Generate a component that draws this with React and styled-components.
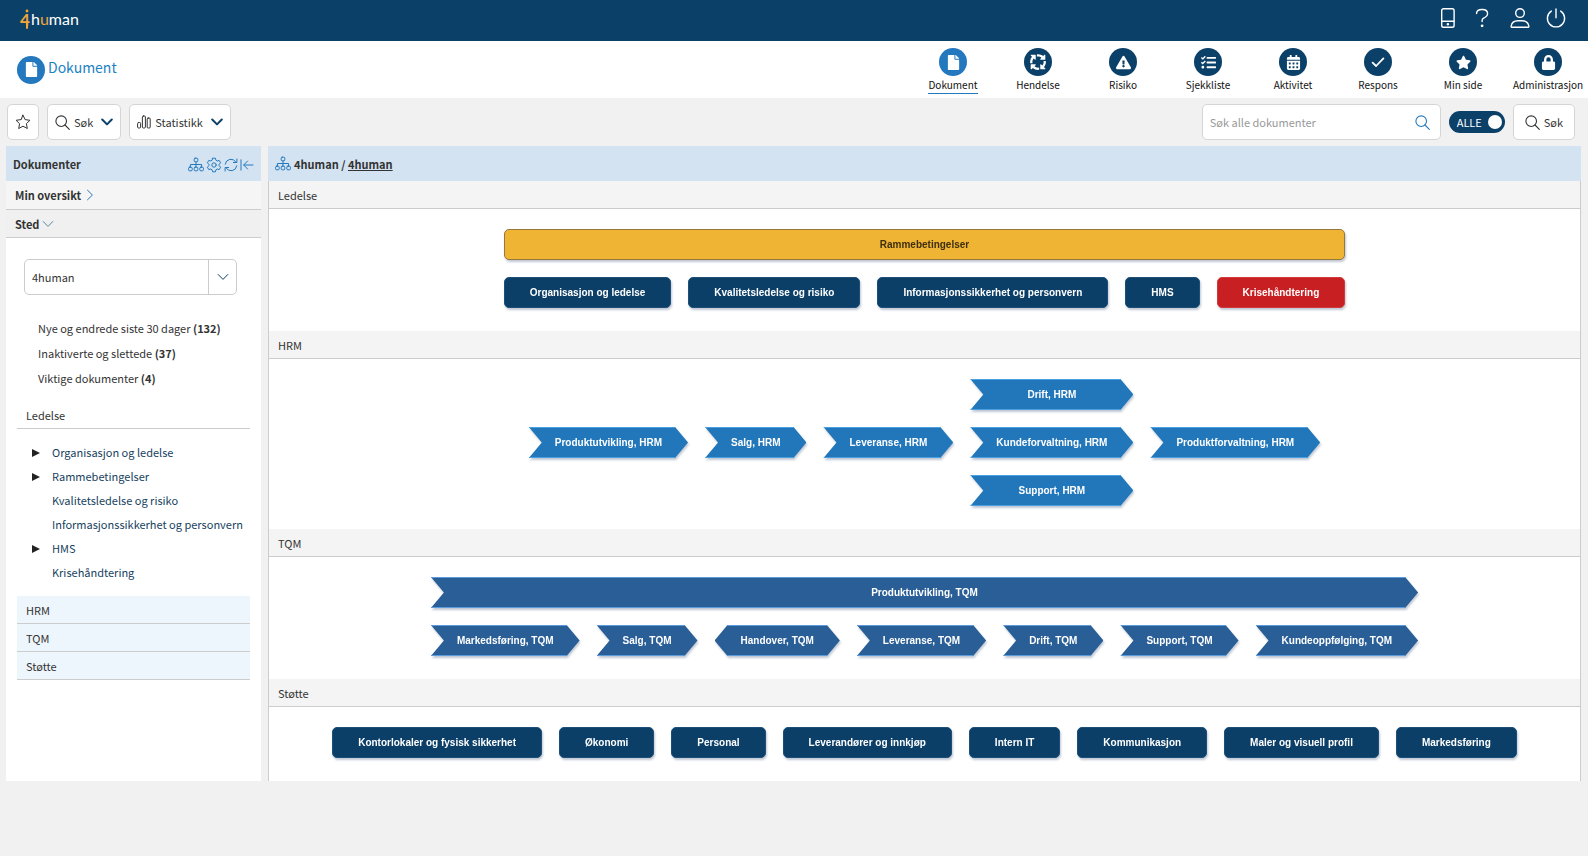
import React from "react";
import styled, { createGlobalStyle } from "styled-components";
import {
  FaFile,
  FaExclamationTriangle,
  FaTasks,
  FaCalendarAlt,
  FaStar,
  FaLock,
} from "react-icons/fa";
import { FaArrowsSpin } from "react-icons/fa6";

//icons
const Icon = ({ size = 16, box = 16, stroke = 1, children }) => (
  <svg
    width={size}
    height={size}
    viewBox={`0 0 ${box} ${box}`}
    fill="none"
    stroke="currentColor"
    strokeWidth={stroke}
    strokeLinecap="round"
    strokeLinejoin="round"
    aria-hidden="true"
  >
    {children}
  </svg>
);

const LogoMark = () => (
  <svg width="60" height="24" viewBox="0 0 60 24">
    <text x="0" y="18" fontSize="17" fontWeight="bold" fill="#f3a536">
      4
    </text>
    <path d="M7 15v5" stroke="#f3a536" strokeWidth="2" strokeLinecap="round" />
    <circle cx="7" cy="3" r="1.4" fill="#f3a536" />
    <text x="11" y="17" fontSize="16" fill="#fff">
      h<tspan fill="#f3a536">u</tspan>man
    </text>
  </svg>
);
const PhoneIcon = () => (
  <Icon size={20} box={20} stroke={1.4}>
    <rect x="3.7" y="0.8" width="12.4" height="18.4" rx="1.8" />
    <path d="M3.7 13.2h12.4" />
    <circle cx="9.9" cy="16.3" r="0.6" fill="currentColor" />
  </Icon>
);
const QuestionIcon = () => (
  <Icon size={20} box={20} stroke={1.4}>
    <path d="M2.6 5.600V4.900C3 2.600 5 1.500 7.600 1.500h0.800c3.200 0 5.200 1.700 5.200 4.200 0 1.800-1 2.900-2.700 3.800l-1.300 0.700c-1 0.600-1.500 1.300-1.500 2.400v1" />
    <circle cx="8.1" cy="17.8" r="0.7" fill="currentColor" />
  </Icon>
);
const UserIcon = () => (
  <Icon size={20} box={20} stroke={1.4}>
    <circle cx="10" cy="5.1" r="4.3" />
    <path d="M1.700 19.200c-0.400 0-0.600-0.300-0.600-0.700 0.500-3.700 3.400-5.700 6.900-5.700h4c3.500 0 6.400 2 6.900 5.700 0 0.400-0.200 0.700-0.600 0.700z" />
  </Icon>
);
const PowerIcon = () => (
  <Icon size={20} box={20} stroke={1.4}>
    <path d="M10 0.900v8.800M5.300 3.100a8.600 8.600 0 1 0 9.400 0" />
  </Icon>
);
const StarIcon = () => (
  <Icon>
    <path d="M8 1.200l2.100 4.400 4.800 0.700-3.500 3.400 0.900 4.800L8 12.200l-4.300 2.300 0.900-4.800L1.100 6.300l4.800-0.700z" />
  </Icon>
);
const SearchIcon = () => (
  <Icon size={15} box={15} stroke={1.1}>
    <circle cx="6.2" cy="6.2" r="5.3" />
    <path d="M10 10l4.300 4.300" />
  </Icon>
);
const BarsIcon = () => (
  <Icon size={14} box={14}>
    <rect x="0.6" y="7.5" width="3" height="5.5" rx="1" />
    <rect x="5.4" y="1" width="3" height="12" rx="1" />
    <rect x="10.2" y="3" width="3" height="10" rx="1" />
  </Icon>
);
const ChevronDown = ({ size = 12, stroke = 1 }) => (
  <Icon size={size} box={12} stroke={stroke}>
    <path d="M1.200 3.500L6 8.400l4.800-4.900" />
  </Icon>
);
const ChevronRight = () => (
  <Icon size={12} box={12}>
    <path d="M3.500 1.200L8.400 6l-4.900 4.800" />
  </Icon>
);
const SitemapIcon = () => (
  <Icon size={16} box={16}>
    <rect x="6.2" y="1.2" width="3.6" height="3.6" rx="1" />
    <rect x="0.6" y="10.2" width="3.6" height="3.6" rx="1" />
    <rect x="6.2" y="10.2" width="3.6" height="3.6" rx="1" />
    <rect x="11.8" y="10.2" width="3.6" height="3.6" rx="1" />
    <path d="M8 4.800v5.400M2.400 10.200V7.500h11.200v2.700" />
  </Icon>
);
const GearIcon = () => (
  <Icon size={16} box={16}>
    <path d="M6.600 1.200h2.800l0.500 2 1.300 0.800 2-0.600 1.400 2.400-1.500 1.500v1.400l1.500 1.500-1.400 2.400-2-0.600-1.300 0.800-0.500 2H6.600l-0.500-2-1.300-0.800-2 0.600-1.400-2.400 1.500-1.500V7.300L1.400 5.800l1.400-2.400 2 0.600 1.300-0.800z" />
    <circle cx="8" cy="8" r="2.2" />
  </Icon>
);
const RefreshIcon = () => (
  <Icon size={14} box={14}>
    <path d="M1.200 6.200A5.800 5.800 0 0 1 12 4.200M12.900 1v3.500H9.400M12.800 7.800A5.800 5.800 0 0 1 2 9.800M1.100 13V9.500h3.500" />
  </Icon>
);
const CollapseIcon = () => (
  <Icon size={14} box={14}>
    <path d="M1 1.800v10.400M13 7H3.800M7.600 3L3.700 7l3.900 4" />
  </Icon>
);
const CheckIcon = () => (
  <Icon size={16} box={16} stroke={1.8}>
    <path d="M2.600 8.600l3.500 3.400 7.300-7.600" />
  </Icon>
);

const modules = [
  { name: "Dokument", icon: <FaFile />, active: true },
  { name: "Hendelse", icon: <FaArrowsSpin size={18} /> },
  { name: "Risiko", icon: <FaExclamationTriangle /> },
  { name: "Sjekkliste", icon: <FaTasks /> },
  { name: "Aktivitet", icon: <FaCalendarAlt /> },
  { name: "Respons", icon: <CheckIcon /> },
  { name: "Min side", icon: <FaStar /> },
  { name: "Administrasjon", icon: <FaLock /> },
];

const shortcuts = [
  { name: "Nye og endrede siste 30 dager", count: 132 },
  { name: "Inaktiverte og slettede", count: 37 },
  { name: "Viktige dokumenter", count: 4 },
];

const tree = [
  { name: "Organisasjon og ledelse", open: true },
  { name: "Rammebetingelser", open: true },
  { name: "Kvalitetsledelse og risiko" },
  { name: "Informasjonssikkerhet og personvern" },
  { name: "HMS", open: true },
  { name: "Krisehåndtering" },
];

// a row holds items, an item that is a list is drawn as a column
const sections = [
  {
    name: "Ledelse",
    shape: "box",
    tone: "navy",
    top: { name: "Rammebetingelser", tone: "yellow" },
    row: [
      "Organisasjon og ledelse",
      "Kvalitetsledelse og risiko",
      "Informasjonssikkerhet og personvern",
      "HMS",
      { name: "Krisehåndtering", tone: "red" },
    ],
  },
  {
    name: "HRM",
    shape: "arrow",
    tone: "blue",
    row: [
      "Produktutvikling, HRM",
      "Salg, HRM",
      "Leveranse, HRM",
      ["Drift, HRM", "Kundeforvaltning, HRM", "Support, HRM"],
      "Produktforvaltning, HRM",
    ],
  },
  {
    name: "TQM",
    shape: "arrow",
    tone: "steel",
    top: { name: "Produktutvikling, TQM" },
    row: [
      "Markedsføring, TQM",
      "Salg, TQM",
      { name: "Handover, TQM", shape: "hex" },
      "Leveranse, TQM",
      "Drift, TQM",
      "Support, TQM",
      "Kundeoppfølging, TQM",
    ],
  },
  {
    name: "Støtte",
    shape: "box",
    tone: "navy",
    row: [
      "Kontorlokaler og fysisk sikkerhet",
      "Økonomi",
      "Personal",
      "Leverandører og innkjøp",
      "Intern IT",
      "Kommunikasjon",
      "Maler og visuell profil",
      "Markedsføring",
    ],
  },
];

const Process = ({ item, section }) => {
  const data = typeof item === "string" ? { name: item } : item;
  return (
    <Shadow>
      <Shape
        type="button"
        $shape={data.shape || section.shape}
        $tone={data.tone || section.tone}
      >
        {data.name}
      </Shape>
    </Shadow>
  );
};

const App = () => {
  return (
    <>
      <GlobalStyle />
      <TopBar>
        <Logo href="#" aria-label="4human">
          <LogoMark />
        </Logo>
        <TopActions>
          <TopButton type="button" aria-label="Mobil">
            <PhoneIcon />
          </TopButton>
          <TopButton type="button" aria-label="Hjelp">
            <QuestionIcon />
          </TopButton>
          <TopButton type="button" aria-label="Profil">
            <UserIcon />
          </TopButton>
          <TopButton type="button" aria-label="Logg ut">
            <PowerIcon />
          </TopButton>
        </TopActions>
      </TopBar>

      <ModuleBar>
        <PageTitle>
          <Circle $active>
            <FaFile />
          </Circle>
          <PageName>Dokument</PageName>
        </PageTitle>
        <Modules>
          {modules.map((item) => (
            <Module href="#" key={item.name}>
              <Circle $active={item.active}>{item.icon}</Circle>
              <ModuleName $active={item.active}>{item.name}</ModuleName>
            </Module>
          ))}
        </Modules>
      </ModuleBar>

      <Toolbar>
        <ToolButton type="button" aria-label="Favoritter">
          <StarIcon />
        </ToolButton>
        <ToolButton type="button">
          <SearchIcon />
          Søk
          <Caret>
            <ChevronDown stroke={2} />
          </Caret>
        </ToolButton>
        <ToolButton type="button">
          <BarsIcon />
          Statistikk
          <Caret>
            <ChevronDown stroke={2} />
          </Caret>
        </ToolButton>
        <Spacer />
        <SearchBox>
          <SearchInput
            type="text"
            placeholder="Søk alle dokumenter"
            aria-label="Søk alle dokumenter"
          />
          <SearchIcon />
        </SearchBox>
        <Toggle>
          ALLE
          <ToggleInput type="checkbox" defaultChecked />
        </Toggle>
        <ToolButton type="button" $wide>
          <SearchIcon />
          Søk
        </ToolButton>
      </Toolbar>

      <Content>
        <Sidebar>
          <PanelHead>
            <PanelTitle>Dokumenter</PanelTitle>
            <PanelActions>
              <IconButton type="button" aria-label="Struktur">
                <SitemapIcon />
              </IconButton>
              <IconButton type="button" aria-label="Innstillinger">
                <GearIcon />
              </IconButton>
              <IconButton type="button" aria-label="Oppdater">
                <RefreshIcon />
              </IconButton>
              <IconButton type="button" aria-label="Skjul">
                <CollapseIcon />
              </IconButton>
            </PanelActions>
          </PanelHead>
          <Fold type="button" $color="#2679bd">
            Min oversikt
            <ChevronRight />
          </Fold>
          <Fold type="button" $open $color="#5f8798">
            Sted
            <ChevronDown />
          </Fold>
          <SidebarBody>
            <SelectBox>
              <Select aria-label="Sted" defaultValue="4human">
                <option>4human</option>
              </Select>
              <SelectArrow>
                <ChevronDown />
              </SelectArrow>
            </SelectBox>
            <Shortcuts>
              {shortcuts.map((item) => (
                <li key={item.name}>
                  <ShortcutLink href="#">
                    {item.name} <b>({item.count})</b>
                  </ShortcutLink>
                </li>
              ))}
            </Shortcuts>
            <Group type="button" $open>
              Ledelse
            </Group>
            <Tree>
              {tree.map((item) => (
                <TreeItem key={item.name}>
                  <TreeMark>{item.open && <Triangle />}</TreeMark>
                  <TreeLink href="#">{item.name}</TreeLink>
                </TreeItem>
              ))}
            </Tree>
            <Group type="button">HRM</Group>
            <Group type="button">TQM</Group>
            <Group type="button">Støtte</Group>
          </SidebarBody>
        </Sidebar>

        <Main>
          <PanelHead>
            <Breadcrumb>
              <SitemapIcon />
              <span>
                4human / <CrumbLink href="#">4human</CrumbLink>
              </span>
            </Breadcrumb>
          </PanelHead>
          <Sections>
            {sections.map((section) => (
              <section key={section.name}>
                <SectionTitle>{section.name}</SectionTitle>
                <Map>
                  <MapInner>
                    {section.top && (
                      <Process item={section.top} section={section} />
                    )}
                    <MapRow>
                      {section.row.map((item, i) =>
                        Array.isArray(item) ? (
                          <MapColumn key={i}>
                            {item.map((sub) => (
                              <Process key={sub} item={sub} section={section} />
                            ))}
                          </MapColumn>
                        ) : (
                          <Process key={i} item={item} section={section} />
                        )
                      )}
                    </MapRow>
                  </MapInner>
                </Map>
              </section>
            ))}
          </Sections>
        </Main>
      </Content>
    </>
  );
};

export default App;

const tones = {
  navy: { bg: "#0b3f68", edge: "#1d4f78", text: "#fff" },
  yellow: { bg: "#f0b435", edge: "#95783a", text: "#3d2f10" },
  red: { bg: "#c82022", edge: "#d03a3c", text: "#fff" },
  blue: { bg: "#2277bb", edge: "#4aa0e0", text: "#fff" },
  steel: { bg: "#295e97", edge: "#5b9bdc", text: "#fff" },
};

const outlines = {
  box: "none",
  arrow:
    "polygon(0 0, calc(100% - 13px) 0, 100% 50%, calc(100% - 13px) 100%, 0 100%, 13px 50%)",
  hex: "polygon(13px 0, calc(100% - 13px) 0, 100% 50%, calc(100% - 13px) 100%, 13px 100%, 0 50%)",
};

const GlobalStyle = createGlobalStyle`
  * {
    box-sizing: border-box;
  }
  body {
    margin: 0;
    background: #f1f1f1;
    color: #333;
    font-family: "Noto Sans CJK SC", "Open Sans", sans-serif;
    font-size: 11px;
    line-height: 20px;
  }
  button, input, select {
    font: inherit;
    color: inherit;
  }
  button {
    cursor: pointer;
  }
  a {
    color: inherit;
    text-decoration: none;
  }
  ul {
    list-style: none;
    margin: 0;
    padding: 0;
  }
  svg {
    display: block;
    flex: none;
  }
`;
const TopBar = styled.header`
  display: flex;
  align-items: flex-start;
  justify-content: space-between;
  height: 41px;
  padding: 8px 22px 0 20px;
  background: #0b4069;
  color: #fff;
`;
const Logo = styled.a`
  font-family: Lato, sans-serif;
`;
const TopActions = styled.div`
  display: flex;
  gap: 16px;
`;
const TopButton = styled.button`
  border: 0;
  padding: 0;
  background: none;
`;
const ModuleBar = styled.div`
  display: flex;
  justify-content: space-between;
  height: 57px;
  background: #fff;
`;
const PageTitle = styled.h1`
  display: flex;
  align-items: center;
  gap: 3px;
  margin: 0;
  padding-left: 17px;
  color: #1b83c4;
  font-size: 14px;
  font-weight: normal;
`;
const PageName = styled.span`
  padding-bottom: 5px;
`;
const Circle = styled.span`
  display: flex;
  align-items: center;
  justify-content: center;
  width: 28px;
  height: 28px;
  border-radius: 50%;
  background: ${(props) => (props.$active ? "#2378be" : "#0b4069")};
  color: #fff;
  font-size: 15px;
`;
const Modules = styled.nav`
  display: flex;
  gap: 5px;
  padding-top: 7px;
`;
const Module = styled.a`
  display: flex;
  flex-direction: column;
  align-items: center;
  width: 80px;
  color: #111;
`;
const ModuleName = styled.span`
  font-size: 10px;
  line-height: 17px;
  border-bottom: 1px solid
    ${(props) => (props.$active ? "#2378be" : "transparent")};
`;
const Toolbar = styled.div`
  display: flex;
  align-items: center;
  gap: 8px;
  height: 48px;
  padding: 0 13px 0 7px;
`;
const ToolButton = styled.button`
  display: flex;
  align-items: center;
  gap: 4px;
  height: 36px;
  padding: ${(props) => (props.$wide ? "0 11px" : "0 7px")};
  border: 1px solid #d5d5d5;
  border-radius: 5px;
  background: #fff;
`;
const Caret = styled.span`
  margin-left: 4px;
  color: #0b4069;
`;
const Spacer = styled.div`
  flex: 1;
`;
const SearchBox = styled.div`
  display: flex;
  align-items: center;
  width: 239px;
  height: 36px;
  padding: 0 10px 0 7px;
  border: 1px solid #d5d5d5;
  border-radius: 5px;
  background: #fff;
  color: #2679bd;
`;
const SearchInput = styled.input`
  flex: 1;
  min-width: 0;
  border: 0;
  padding: 0;
  outline: 0;
  background: none;
  color: #333;
  &::placeholder {
    color: #999;
  }
`;
const Toggle = styled.label`
  display: flex;
  align-items: center;
  justify-content: space-between;
  width: 56px;
  height: 22px;
  padding: 0 3px 0 8px;
  border-radius: 11px;
  background: #0b4069;
  color: #fff;
`;
const ToggleInput = styled.input`
  appearance: none;
  width: 14px;
  height: 14px;
  margin: 0;
  border-radius: 50%;
  background: #fff;
`;
const Content = styled.div`
  display: flex;
  gap: 7px;
  padding: 0 7px 0 6px;
`;
const Sidebar = styled.aside`
  display: flex;
  flex-direction: column;
  flex: none;
  width: 255px;
`;
const PanelHead = styled.div`
  display: flex;
  align-items: center;
  justify-content: space-between;
  height: 35px;
  padding: 0 7px;
  background: #d3e3f2;
`;
const PanelTitle = styled.h2`
  margin: 0;
  font-size: 11px;
`;
const PanelActions = styled.div`
  display: flex;
  align-items: center;
  gap: 2px;
  padding-top: 3px;
  color: #2679bd;
`;
const IconButton = styled.button`
  border: 0;
  padding: 0;
  background: none;
  color: inherit;
`;
const Fold = styled.button`
  display: flex;
  align-items: center;
  gap: 3px;
  height: ${(props) => (props.$open ? "28px" : "29px")};
  padding: 0 9px;
  border: 0;
  border-bottom: 1px solid #ccc;
  background: ${(props) => (props.$open ? "#f0f0f0" : "#f5f5f5")};
  font-weight: bold;
  svg {
    color: ${(props) => props.$color};
  }
`;
const SidebarBody = styled.div`
  flex: 1;
  padding: 21px 11px 0;
  background: #fff;
`;
const SelectBox = styled.div`
  position: relative;
  margin: 0 13px 0 7px;
`;
const Select = styled.select`
  display: block;
  width: 100%;
  height: 36px;
  padding: 0 36px 0 7px;
  appearance: none;
  border: 1px solid #ccc;
  border-radius: 5px;
  background: #fff;
`;
const SelectArrow = styled.span`
  position: absolute;
  top: 1px;
  right: 1px;
  bottom: 1px;
  display: flex;
  align-items: center;
  justify-content: center;
  width: 28px;
  border-left: 1px solid #ccc;
  color: #0b4069;
  pointer-events: none;
`;
const Shortcuts = styled.ul`
  padding: 21px 0 10px 21px;
  line-height: 25px;
`;
const ShortcutLink = styled.a`
  white-space: nowrap;
`;
const Group = styled.button`
  display: block;
  width: 100%;
  height: 28px;
  padding: 0 9px;
  border: 0;
  border-bottom: 1px solid #ccc;
  background: ${(props) => (props.$open ? "none" : "#eef6fd")};
  text-align: left;
`;
const Tree = styled.ul`
  padding: 11px 0 12px;
  line-height: 24px;
`;
const TreeItem = styled.li`
  display: flex;
  align-items: center;
  white-space: nowrap;
`;
const TreeMark = styled.span`
  flex: none;
  width: 35px;
  padding: 2px 0 0 15px;
`;
const Triangle = styled.span`
  display: block;
  width: 8px;
  border-left: 8px solid #222;
  border-top: 4px solid transparent;
  border-bottom: 4px solid transparent;
`;
const TreeLink = styled.a`
  color: #163f60;
`;
const Main = styled.main`
  flex: 1;
  min-width: 0;
`;
const Breadcrumb = styled.div`
  display: flex;
  align-items: center;
  gap: 3px;
  font-weight: bold;
  svg {
    color: #2679bd;
  }
`;
const CrumbLink = styled.a`
  text-decoration: underline;
`;
const Sections = styled.div`
  border: 1px solid #ccc;
  border-width: 0 1px;
  background: #fff;
`;
const SectionTitle = styled.h3`
  height: 28px;
  margin: 0;
  padding: 0 9px;
  border-bottom: 1px solid #ccc;
  background: #f4f4f4;
  font-size: 11px;
  font-weight: normal;
  line-height: 28px;
`;
const Map = styled.div`
  display: flex;
  justify-content: center;
  padding: 20px 0 23px;
`;
const MapInner = styled.div`
  display: flex;
  flex-direction: column;
  gap: 17px;
`;
const MapRow = styled.div`
  display: flex;
  align-items: center;
  gap: 17px;
`;
const MapColumn = styled.div`
  display: flex;
  flex-direction: column;
  gap: 17px;
`;
const Shadow = styled.div`
  display: flex;
  filter: drop-shadow(1px 2px 1px rgba(0, 30, 80, 0.25));
`;
const Shape = styled.button`
  flex: 1;
  height: 31px;
  padding: ${(props) => (props.$shape === "box" ? "0 25px" : "0 26px")};
  border: solid ${(props) => tones[props.$tone].edge};
  border-width: ${(props) => (props.$shape === "box" ? "1px" : "1px 0")};
  border-radius: ${(props) => (props.$shape === "box" ? "5px" : "0")};
  background: ${(props) => tones[props.$tone].bg};
  clip-path: ${(props) => outlines[props.$shape]};
  color: ${(props) => tones[props.$tone].text};
  font-family: "Liberation Sans", Arial, sans-serif;
  font-size: 10px;
  font-weight: bold;
  white-space: nowrap;
`;
